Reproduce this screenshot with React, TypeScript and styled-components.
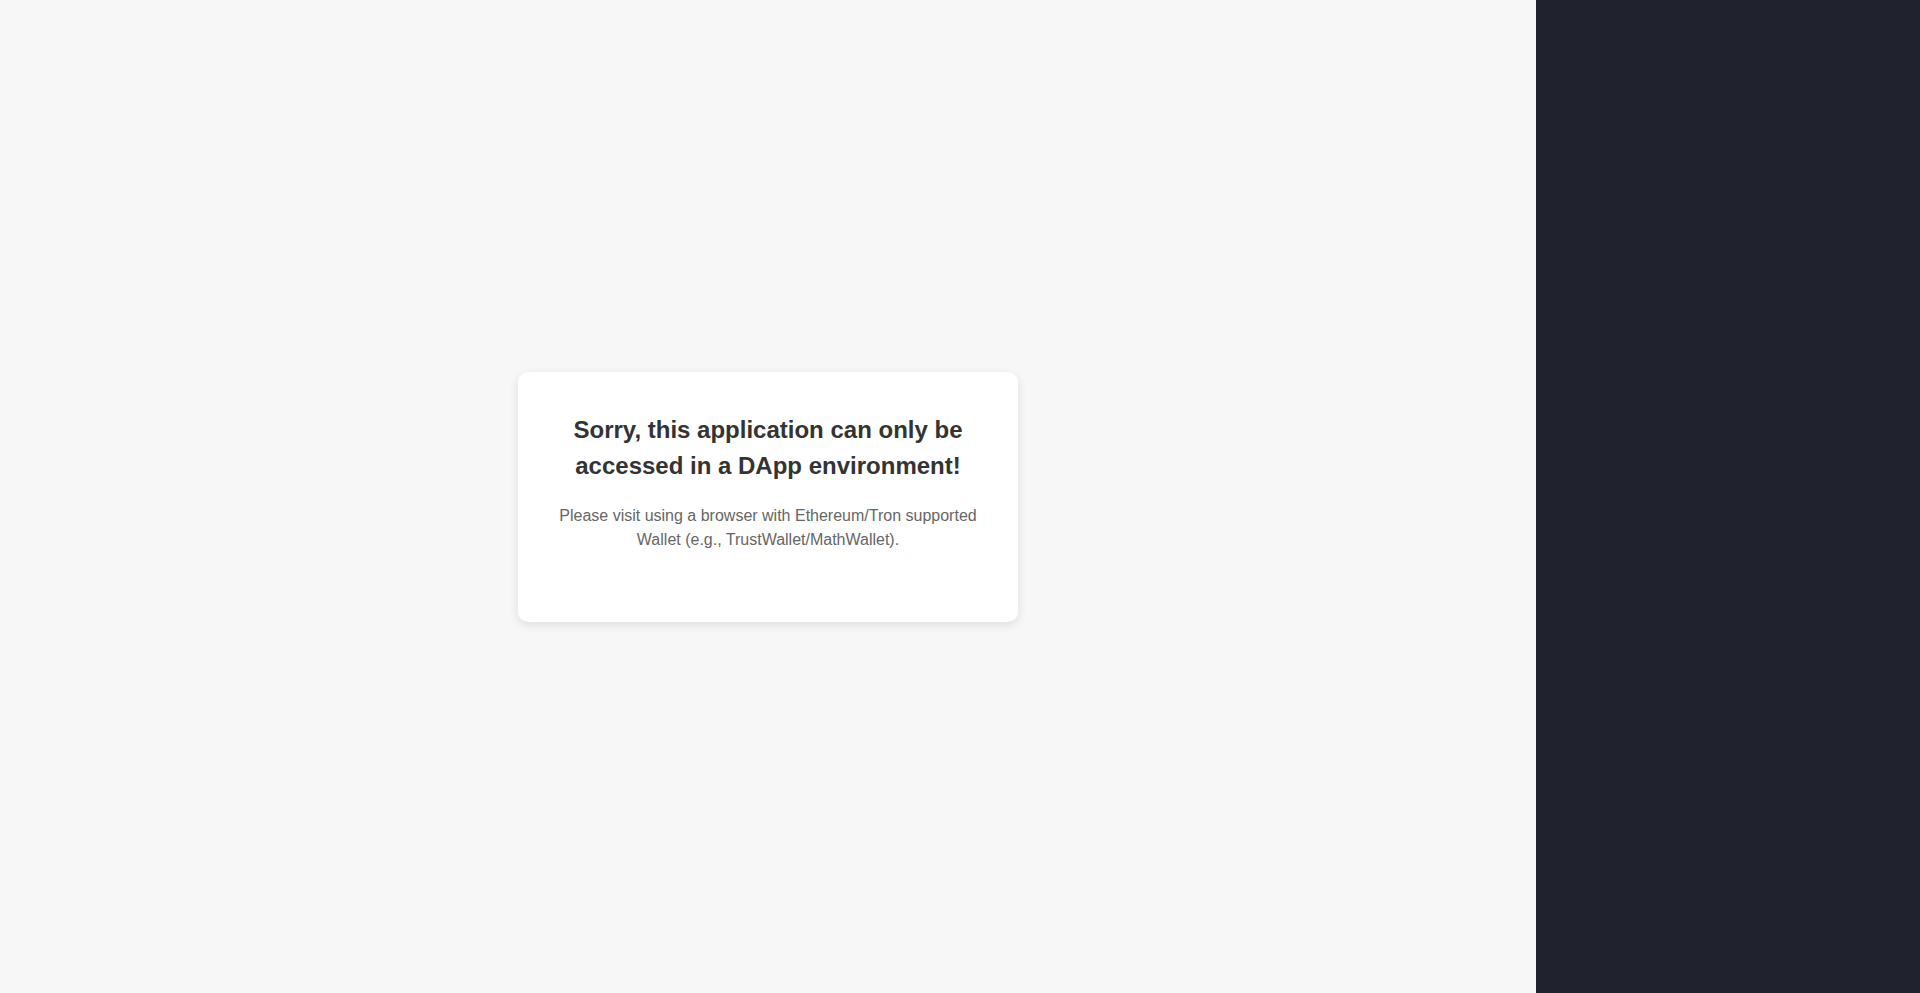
import React from 'react';
import styled, { createGlobalStyle } from 'styled-components';

const GlobalStyle = createGlobalStyle`
  html, body {
    margin: 0;
    padding: 0;
    height: 100%;
  }
  body {
    font-family: "Liberation Sans", Arial, sans-serif;
    background: #f7f7f7;
  }
  #root {
    height: 100%;
  }
`;

const App: React.FC = () => {
  return (
    <>
      <GlobalStyle />
      <Layout>
        <Main>
          <Card>
            <Title>Sorry, this application can only be accessed in a DApp environment!</Title>
            <Message>
              Please visit using a browser with Ethereum/Tron supported Wallet (e.g., TrustWallet/MathWallet).
            </Message>
          </Card>
        </Main>
        <Side />
      </Layout>
    </>
  );
};

const Layout = styled.div`
  display: flex;
  width: 100vw;
  height: 100vh;
  overflow: hidden;
`;

const Main = styled.main`
  flex: 1;
  display: flex;
  align-items: center;
  justify-content: center;
  background: #f7f7f7;
`;

const Side = styled.aside`
  width: 384px;
  flex-shrink: 0;
  background: #20222d;
`;

const Card = styled.div`
  box-sizing: border-box;
  width: 500px;
  min-height: 250px;
  padding: 40px 40px 40px;
  background: #ffffff;
  border-radius: 10px;
  box-shadow: 0 3px 10px rgba(0, 0, 0, 0.1);
  text-align: center;
`;

const Title = styled.h2`
  margin: 0 0 20px;
  font-size: 24px;
  line-height: 36px;
  font-weight: 700;
  color: #333333;
`;

const Message = styled.p`
  margin: 0;
  font-size: 16px;
  line-height: 24px;
  color: #666666;
`;

export default App;
